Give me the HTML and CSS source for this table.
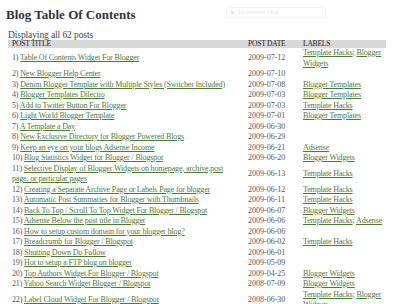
FILE: index.html
```html
<!DOCTYPE html>
<html>
<head>
<meta charset="utf-8">
<link rel="stylesheet" href="styles.css">
</head>
<body>
<div class="page">
  <div class="top">
    <h1 class="title">Blog Table Of Contents</h1>
    <div class="search"><span class="dot"></span><span class="stext">Technorati blog</span></div>
  </div>
  <div class="count">Displaying all 62 posts</div>
  <table class="toc">
    <thead>
      <tr><th class="c-title">POST TITLE</th><th class="c-date">POST DATE</th><th class="c-lab">LABELS</th></tr>
    </thead>
    <tbody>
      <tr><td>1) <a href="#">Table Of Contents Widget For Blogger</a></td><td class="d">2009-07-12</td><td class="l"><a href="#">Template Hacks</a>; <a href="#">Blogger Widgets</a></td></tr>
      <tr><td>2) <a href="#">New Blogger Help Center</a></td><td class="d">2009-07-10</td><td class="l"></td></tr>
      <tr><td>3) <a href="#">Denim Blogger Template with Multiple Styles (Switcher Included)</a></td><td class="d">2009-07-08</td><td class="l"><a href="#">Blogger Templates</a></td></tr>
      <tr><td>4) <a href="#">Blogger Templates Dilectio</a></td><td class="d">2009-07-03</td><td class="l"><a href="#">Blogger Templates</a></td></tr>
      <tr><td>5) <a href="#">Add to Twitter Button For Blogger</a></td><td class="d">2009-07-03</td><td class="l"><a href="#">Template Hacks</a></td></tr>
      <tr><td>6) <a href="#">Light World Blogger Template</a></td><td class="d">2009-07-01</td><td class="l"><a href="#">Blogger Templates</a></td></tr>
      <tr><td>7) <a href="#">A Template a Day</a></td><td class="d">2009-06-30</td><td class="l"></td></tr>
      <tr><td>8) <a href="#">New Exclusive Directory for Blogger Powered Blogs</a></td><td class="d">2009-06-29</td><td class="l"></td></tr>
      <tr><td>9) <a href="#">Keep an eye on your blogs Adsense Income</a></td><td class="d">2009-06-21</td><td class="l"><a href="#">Adsense</a></td></tr>
      <tr><td>10) <a href="#">Blog Statistics Widget for Blogger / Blogspot</a></td><td class="d">2009-06-20</td><td class="l"><a href="#">Blogger Widgets</a></td></tr>
      <tr><td>11) <a href="#">Selective Display of Blogger Widgets on homepage, archive,post page, or particular pages</a></td><td class="d">2009-06-13</td><td class="l"><a href="#">Template Hacks</a></td></tr>
      <tr><td>12) <a href="#">Creating a Separate Archive Page or Labels Page for blogger</a></td><td class="d">2009-06-12</td><td class="l"><a href="#">Template Hacks</a></td></tr>
      <tr><td>13) <a href="#">Automatic Post Summaries for Blogger with Thumbnails</a></td><td class="d">2009-06-11</td><td class="l"><a href="#">Template Hacks</a></td></tr>
      <tr><td>14) <a href="#">Back To Top / Scroll To Top Widget For Blogger / Blogspot</a></td><td class="d">2009-06-07</td><td class="l"><a href="#">Blogger Widgets</a></td></tr>
      <tr><td>15) <a href="#">Adsense Below the post title in Blogger</a></td><td class="d">2009-06-06</td><td class="l"><a href="#">Template Hacks</a>; <a href="#">Adsense</a></td></tr>
      <tr><td>16) <a href="#">How to setup custom domain for your blogger blog?</a></td><td class="d">2009-06-06</td><td class="l"></td></tr>
      <tr><td>17) <a href="#">Breadcrumb for Blogger / Blogspot</a></td><td class="d">2009-06-02</td><td class="l"><a href="#">Template Hacks</a></td></tr>
      <tr><td>18) <a href="#">Shutting Down Do Follow</a></td><td class="d">2009-06-01</td><td class="l"></td></tr>
      <tr><td>19) <a href="#">Hot to setup a FTP blog on blogger</a></td><td class="d">2009-05-09</td><td class="l"></td></tr>
      <tr><td>20) <a href="#">Top Authors Widget For Blogger / Blogspot</a></td><td class="d">2009-04-25</td><td class="l"><a href="#">Blogger Widgets</a></td></tr>
      <tr><td>21) <a href="#">Yahoo Search Widget Blogger / Blogspot</a></td><td class="d">2008-07-09</td><td class="l"><a href="#">Blogger Widgets</a></td></tr>
      <tr><td>22) <a href="#">Label Cloud Widget For Blogger / Blogspot</a></td><td class="d">2008-06-30</td><td class="l"><a href="#">Template Hacks</a>; <a href="#">Blogger Widgets</a></td></tr>
    </tbody>
  </table>
</div>
</body>
</html>
```
FILE: styles.css
```css
html, body { margin: 0; padding: 0; background: #fff; }
body { font-family: "Liberation Serif", "DejaVu Serif", serif; color: #444; }
.page { padding: 4px 0 0 6px; }
.top { display: flex; align-items: center; height: 22px; }
.title { margin: 0; font-size: 13px; line-height: 16px; font-weight: bold; color: #333; }
.search { margin-left: 90px; width: 94px; height: 9px; border: 1px solid #f2f2f2; border-radius: 2px; display: flex; align-items: center; gap: 4px; padding-left: 4px; margin-top: -6px; }
.dot { width: 3px; height: 3px; background: #e2e2e2; }
.stext { font-size: 6.5px; line-height: 8px; color: #e4e4e4; }
.count { font-size: 9.5px; color: #444; margin: 4px 0 0 2px; line-height: 10px; letter-spacing: -0.1px; }
.toc { border-collapse: collapse; margin-left: 2px; width: 378px; table-layout: fixed; font-size: 8px; line-height: 10.5px; letter-spacing: -0.15px; }
.toc th { background: #d8d8d8; color: #222; font-weight: normal; text-align: left; padding: 0 4px; height: 8px; line-height: 8px; font-size: 7.5px; letter-spacing: -0.2px; }
.c-title { width: 228px; }
.c-date { width: 47px; }
.toc td { padding: 0 4px; vertical-align: middle; color: #555; }
.toc td:first-child { padding-right: 12px; }
.toc td.d { letter-spacing: 0; }
.toc td.l { padding-right: 0; }
.toc a { color: #4d7a35; text-decoration: underline; }
```
